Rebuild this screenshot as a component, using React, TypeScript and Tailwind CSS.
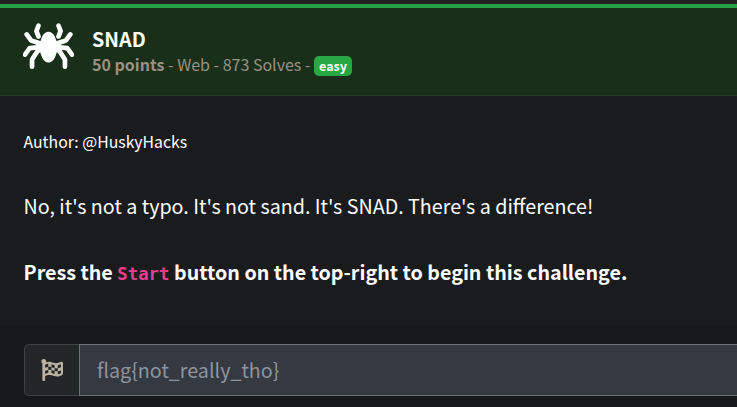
import { FaFlagCheckered } from "react-icons/fa";

function Spider() {
  return (
    <svg viewBox="69 68 152 137" className="mt-[15px] h-[46px] w-[51px] shrink-0" fill="none" stroke="white" strokeWidth="14" strokeLinecap="round" strokeLinejoin="round" aria-hidden="true">
      <ellipse cx="145" cy="140" rx="26" ry="46" fill="white" stroke="none" />
      <path d="M104 124L145 120L186 124L176 148H114Z" fill="white" stroke="none" />
      <path d="M115 76L109 92L115 108M80 102L93 120L128 131M75 162L89 143L128 139M96 198V177L112 152L128 142" />
      <path d="M175 76L181 92L175 108M210 102L197 120L162 131M215 162L201 143L162 139M194 198V177L178 152L162 142" />
    </svg>
  );
}

export default function App() {
  return (
    <main className="h-[407px] w-full overflow-hidden bg-[#17181a] font-['Noto_Sans_CJK_SC',sans-serif] text-white">
      <div className="h-1 bg-[#202125]" />
      <header className="flex h-[92px] items-start border-t-4 border-b border-t-[#28a047] border-b-[#263c26] bg-[#192f1a] pl-[23px]">
        <Spider />
        <div className="ml-[18px] pt-[17px]">
          <h1 className="text-[19.7px] leading-[28px] font-bold">SNAD</h1>
          <p className="-mt-px flex h-[24px] items-center text-[16px] leading-[24px] whitespace-pre text-[#9a9184]">
            <b>50 points</b> - Web - 873 Solves - <span className="mt-[3px] flex h-5 items-center rounded-[5px] bg-[#28a745] px-[5px] text-[12.6px] leading-5 font-bold text-white">easy</span>
          </p>
        </div>
      </header>
      <section className="h-[230px] bg-[#1a1b1d] pt-[34px] pl-[23.5px] whitespace-nowrap">
        <p className="text-[15.8px] leading-[24px]">Author: @HuskyHacks</p>
        <p className="mt-[36px] text-[19.7px] leading-[32px]">No, it's not a typo. It's not sand. It's SNAD. There's a difference!</p>
        <p className="mt-[34px] text-[19.7px] leading-[32px] font-bold">
          Press the <code className="font-['DejaVu_Sans_Mono',monospace] text-[17.4px] font-bold text-[#e83e8c]">Start</code> button on the top-right to begin this challenge.
        </p>
      </section>
      <div className="flex pt-[18px] pl-6">
        <div className="flex h-[52px] w-[55px] items-center justify-center rounded-l-[5px] border border-r-0 border-[#3c4142] bg-[#222626]">
          <FaFlagCheckered className="size-[22px] text-[#bcb3a5]" />
        </div>
        <div className="flex h-[52px] flex-1 items-center border border-r-0 border-[#6b737c] bg-[#353941] pl-[17px] text-[19.7px] text-[#8d949e]">flag{"{"}not_really_tho{"}"}</div>
      </div>
    </main>
  );
}
